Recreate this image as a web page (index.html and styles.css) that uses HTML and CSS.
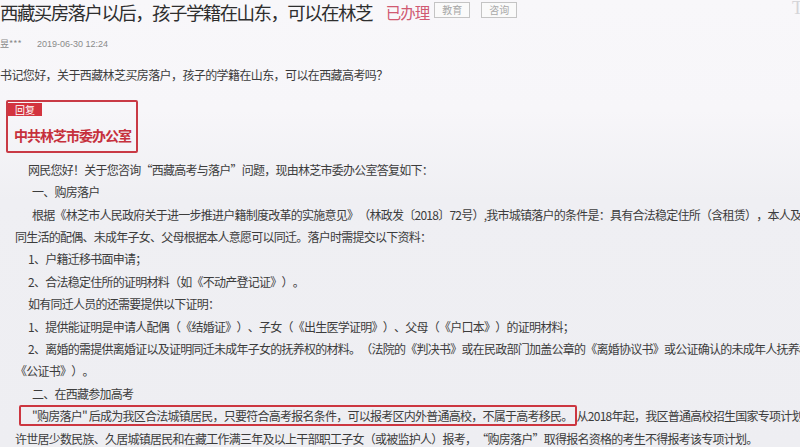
FILE: index.html
```html
<!DOCTYPE html>
<html lang="zh-CN">
<head>
    <meta charset="UTF-8">
    <meta name="viewport" content="width=device-width, initial-scale=1.0">
    <title>西藏买房落户以后，孩子学籍在山东，可以在林芝</title>
    <link rel="stylesheet" href="styles.css">
</head>
<body>

<div class="page">
    <span class="corner">T</span>

    <div class="head">
        <h1>西藏买房落户以后，孩子学籍在山东，可以在林芝</h1>
        <span class="status">已办理</span>
        <span class="tag">教育</span>
        <span class="tag">咨询</span>
    </div>

    <div class="meta">
        <span class="user">昱***</span>
        <span class="date">2019-06-30 12:24</span>
    </div>

    <p class="ask">书记您好，关于西藏林芝买房落户，孩子的学籍在山东，可以在西藏高考吗？</p>

    <div class="reply">
        <span class="reply-tag">回复</span>
        <div class="reply-name">中共林芝市委办公室</div>
    </div>

    <div class="answer">
        <p class="lead">网民您好！关于您咨询“西藏高考与落户”问题，现由林芝市委办公室答复如下：</p>
        <p class="sub">一、购房落户</p>
        <p class="sub">根据《林芝市人民政府关于进一步推进户籍制度改革的实施意见》（林政发〔2018〕72号）,我市城镇落户的条件是：具有合法稳定住所（含租赁），本人及其共</p>
        <p class="cont">同生活的配偶、未成年子女、父母根据本人意愿可以同迁。落户时需提交以下资料：</p>
        <p class="lead">1、户籍迁移书面申请；</p>
        <p class="lead">2、合法稳定住所的证明材料（如《不动产登记证》）。</p>
        <p class="lead">如有同迁人员的还需要提供以下证明：</p>
        <p class="lead">1、提供能证明是申请人配偶（《结婚证》）、子女（《出生医学证明》）、父母（《户口本》）的证明材料；</p>
        <p class="lead">2、离婚的需提供离婚证以及证明同迁未成年子女的抚养权的材料。（法院的《判决书》或在民政部门加盖公章的《离婚协议书》或公证确认的未成年人抚养权</p>
        <p class="cont">《公证书》）。</p>
        <p class="sub">二、在西藏参加高考</p>
        <p class="mark-line"><span class="mark">"购房落户" 后成为我区合法城镇居民，只要符合高考报名条件，可以报考区内外普通高校，不属于高考移民。</span>从2018年起，我区普通高校招生国家专项计划允</p>
        <p class="cont">许世居少数民族、久居城镇居民和在藏工作满三年及以上干部职工子女（或被监护人）报考，“购房落户”取得报名资格的考生不得报考该专项计划。</p>
    </div>
</div>

</body>
</html>
```

FILE: styles.css
```css
body {
    margin: 0;
    font-family: "Noto Sans CJK SC", "Noto Sans", sans-serif;
    color: #3c3c3c;
    background: linear-gradient(#f8f7fa 0, #f7f6f9 110px, #efeff3 200px, #eeeef2 100%);
    overflow: hidden;
    text-spacing-trim: space-all;
}

.page {
    position: relative;
    width: 800px;
    height: 447px;
    overflow: hidden;
}

.corner {
    position: absolute;
    top: -2px;
    right: -3px;
    font-family: "Liberation Serif", serif;
    font-size: 18px;
    color: #d4d4d8;
}

.head {
    display: flex;
    align-items: center;
    height: 24px;
    white-space: nowrap;
}

h1 {
    margin: 0;
    font-size: 18.5px;
    font-weight: normal;
    letter-spacing: -1.6px;
    color: #2e2e2e;
}

.status {
    margin-left: 14px;
    font-size: 15.5px;
    letter-spacing: -1px;
    color: #d05a72;
}

.tag {
    display: inline-block;
    width: 34px;
    height: 14px;
    margin-left: 5px;
    margin-top: -4px;
    border: 1px solid #c4c4c4;
    font-size: 10px;
    line-height: 14px;
    text-align: center;
    color: #a8a8a8;
    background-color: #fafafa;
}

.tag + .tag {
    margin-left: 11px;
}

.meta {
    margin-top: 13px;
    height: 14px;
    line-height: 14px;
    font-size: 9px;
    color: #8a8a8a;
}

.user {
    display: inline-block;
    width: 35px;
}

.date {
    font-family: "Liberation Sans", sans-serif;
}

.ask {
    margin: 16px 0 0;
    font-size: 12px;
    line-height: 16px;
    letter-spacing: -0.6px;
    white-space: nowrap;
}

.reply {
    width: 128px;
    margin: 17px 0 0 6px;
    padding-bottom: 7px;
    border: 2px solid #c93a45;
    border-radius: 2px;
}

.reply-tag {
    display: block;
    width: 34px;
    height: 13px;
    margin-top: 1px;
    font-size: 10px;
    line-height: 13px;
    text-align: center;
    color: #fff;
    background-color: #d3343f;
}

.reply-name {
    margin: 10px 0 0 6px;
    font-size: 14px;
    font-weight: bold;
    line-height: 18px;
    letter-spacing: -1px;
    color: #c6303c;
}

.answer {
    margin-top: 5.8px;
    font-size: 12px;
    line-height: 22.4px;
    letter-spacing: -0.75px;
    white-space: nowrap;
}

.answer p {
    margin: 0;
}

.answer .lead {
    padding-left: 28px;
}

.answer .sub {
    padding-left: 32px;
}

.answer .cont {
    padding-left: 15px;
}

.answer .mark-line {
    padding-left: 19px;
}

.mark {
    padding: 0 2px 0 11px;
    border: 2px solid #cc3640;
    border-radius: 2px;
}
```
